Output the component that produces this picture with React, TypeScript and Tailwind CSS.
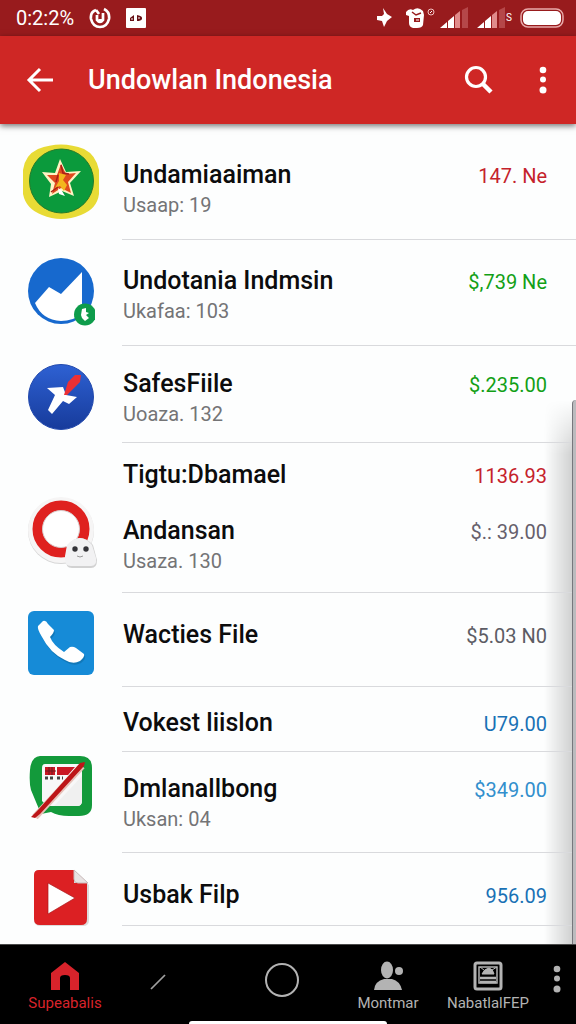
import type { ReactNode } from "react";

type Entry = { title: string; sub?: string; price: string; tone: string };
type Row = {
  height: string;
  iconPad: string;
  textPad: string;
  icon?: ReactNode;
  entries: Entry[];
};

function StarBadge() {
  return (
    <svg width="76" height="76" viewBox="0 0 76 76" aria-hidden="true">
      <path d="M15 5Q38-4 61 5Q73 11 76 26V50Q74 65 58 71Q38 79 19 71Q3 65 0 50V26Q2 11 15 5Z" fill="#e8db35" />
      <circle cx="38.500" cy="37" r="32" fill="#0b9a3c" stroke="#257a2b" />
      <path d="M37 15L43 28L58 27L47 39L51 52L39 47L26 53L28 40L19 28L32 29Z" fill="#fff3c4" />
      <path d="M38 20L43 30L53 29L45 38L48 49L38 44L29 50L32 39L24 31L34 31Z" fill="#df4a1e" />
      <path d="M36 29L43 31L40 36L44 41L41 47L37 42L32 44L36 37Z" fill="#f3b51d" />
      <path d="M38 21L40 29L46 30M28 48L35 43M35 31L33 38" stroke="#a91f17" strokeWidth="1.500" fill="none" />
      <path d="M35 44L39 47L42 52L36 50Z" fill="#fff" />
    </svg>
  );
}

function MountainBadge() {
  return (
    <svg width="68" height="70" viewBox="0 0 68 70" aria-hidden="true">
      <circle cx="34" cy="34" r="33" fill="#1769ce" />
      <path d="M8 46L22 30L34 37L55 15V57Q46 64 34 64Q15 63 8 46Z" fill="#fff" />
      <circle cx="58" cy="57.500" r="11" fill="#0e9c4b" />
      <path d="M55 52L59 51V55L62 56L59 58L62 61L58 64L55 61L54 58Z" fill="#fff" />
    </svg>
  );
}

function CompassBadge() {
  return (
    <svg width="68" height="68" viewBox="0 0 68 68" aria-hidden="true">
      <defs>
        <linearGradient id="compass" x1="0" y1="0" x2="0" y2="1">
          <stop stopColor="#2e61d3" />
          <stop offset="1" stopColor="#173b9b" />
        </linearGradient>
      </defs>
      <circle cx="34" cy="34" r="32.500" fill="url(#compass)" stroke="#234aae" />
      <path d="M20 25L36 24L39 32L50 34L42 41L36 38L25 51L21 47L28 32Z" fill="#fff" />
      <path d="M37 32L41 19L48 12L54 12L53 19L40 32Z" fill="#ed3034" />
    </svg>
  );
}

function RingBadge() {
  return (
    <svg width="72" height="74" viewBox="0 0 72 74" aria-hidden="true">
      <circle cx="36" cy="35" r="33" fill="#d6d6d6" />
      <circle cx="36" cy="34" r="33" fill="#f6f5f5" />
      <circle cx="36" cy="33" r="23.500" fill="#fff" stroke="#df211f" strokeWidth="10" />
      <circle cx="36" cy="33" r="18.500" fill="none" stroke="#d8cccc" />
      <path d="M41 62L43 49Q55 35 68 49L72 64Q72 72 66 72H47Q40 72 41 62Z" fill="#d2d2d2" />
      <path d="M40 60L42 49Q55 35 67 49L71 62Q72 70 66 70H46Q39 70 40 60Z" fill="#f2f2f3" />
      <circle cx="50" cy="53" r="2.700" fill="#343438" />
      <circle cx="61" cy="53" r="2.700" fill="#343438" />
      <path d="M52 60Q55 62 58 60" stroke="#999" fill="none" />
    </svg>
  );
}

function PhoneBadge() {
  const handset = "M11 16L16 11Q19 10 21 14L27 20Q27 23 23 27Q26 35 37 42L43 37Q46 36 49 38L57 44Q58 47 53 51Q46 55 38 50Q23 43 15 27Q10 19 11 16Z";
  return (
    <svg width="68" height="66" viewBox="0 0 68 66" aria-hidden="true">
      <rect x="1" y="1" width="66" height="64" rx="6" fill="#168bd7" />
      <path d={handset} fill="#1178b9" transform="translate(1 2)" />
      <path d={handset} fill="#fff" />
    </svg>
  );
}

function NoteBadge() {
  return (
    <svg width="64" height="64" viewBox="0 0 64 64" aria-hidden="true">
      <path d="M11 1H51Q63 1 63 13V50Q63 61 50 61H40Q29 61 22 57L12 59L2 35Q0 28 1 15Q2 2 11 1Z" fill="#139a3b" />
      <path d="M16 9H50Q53 9 53 13V46Q53 51 48 51H18L13 46V13Q13 9 16 9Z" fill="#f8f8f8" />
      <path d="M25 51L53 21V46Q53 51 48 51Z" fill="#f0f0f0" />
      <path d="M16 12H26V20H16ZM28 12H46L39 20H28Z" fill="#ca1824" />
      <path d="M20 12V20M23 12V20M16 16H27" stroke="#6d1a20" />
      <path d="M16 23H25M28 23H34" stroke="#444" strokeWidth="3" strokeDasharray="3 2" />
      <path d="M6 62L53 11" stroke="#e7c1b8" strokeWidth="7" />
      <path d="M2 62L9 55L51 8L56 7L55 11L11 59L6 63Z" fill="#bd1518" />
    </svg>
  );
}

function PlayBadge() {
  return (
    <svg width="60" height="57" viewBox="0 1 60 57" aria-hidden="true">
      <path d="M8 2H42L58 17V52Q58 58 52 58H10Q3 58 3 52V8Q3 2 8 2Z" fill="#aaa" opacity=".4" />
      <path d="M8 2H43V15H56V51Q56 57 50 57H9Q3 57 3 51V7Q3 2 8 2Z" fill="#dc2023" />
      <path d="M43 2L57 15H47Q43 15 43 11Z" fill="#e8e3e3" stroke="#c8baba" />
      <path d="M17 15L44 30L17 46Z" fill="#fff" stroke="#ab181b" strokeWidth=".7" />
    </svg>
  );
}

const rows: Row[] = [
  { height: "min-h-[116px]", iconPad: "pt-5", textPad: "pt-9", icon: <StarBadge />, entries: [{ title: "Undamiaaiman", sub: "Usaap: 19", price: "147. Ne", tone: "text-[#c5222b]" }] },
  { height: "min-h-[106px]", iconPad: "pt-[17px]", textPad: "pt-[26px]", icon: <MountainBadge />, entries: [{ title: "Undotania Indmsin", sub: "Ukafaa: 103", price: "$,739 Ne", tone: "text-[#12a016]" }] },
  { height: "min-h-[97px]", iconPad: "pt-[17px]", textPad: "pt-[23px]", icon: <CompassBadge />, entries: [{ title: "SafesFiile", sub: "Uoaza. 132", price: "$.235.00", tone: "text-[#12a016]" }] },
  {
    height: "min-h-[150px]",
    iconPad: "pt-[53px]",
    textPad: "pt-[17px]",
    icon: <RingBadge />,
    entries: [
      { title: "Tigtu:Dbamael", price: "1136.93", tone: "text-[#c5222b]" },
      { title: "Andansan", sub: "Usaza. 130", price: "$.: 39.00", tone: "text-[#66606c]" },
    ],
  },
  { height: "min-h-[94px]", iconPad: "pt-[17px]", textPad: "pt-[27px]", icon: <PhoneBadge />, entries: [{ title: "Wacties File", price: "$5.03 N0", tone: "text-[#5c5c64]" }] },
  { height: "min-h-[65px]", iconPad: "pt-0", textPad: "pt-[21px]", entries: [{ title: "Vokest liislon", price: "U79.00", tone: "text-[#1971b5]" }] },
  { height: "min-h-[101px]", iconPad: "pt-[3px]", textPad: "pt-[22px]", icon: <NoteBadge />, entries: [{ title: "Dmlanallbong", sub: "Uksan: 04", price: "$349.00", tone: "text-[#328fcd]" }] },
  { height: "min-h-[73px]", iconPad: "pt-4", textPad: "pt-[27px]", icon: <PlayBadge />, entries: [{ title: "Usbak Filp", price: "956.09", tone: "text-[#1971b5]" }] },
];

function ListRow({ row }: { row: Row }) {
  return (
    <li className={`flex items-stretch ${row.height}`}>
      <div className={`flex w-[122px] shrink-0 justify-center ${row.iconPad}`}>
        <div>{row.icon}</div>
      </div>
      <div className={`flex flex-1 flex-col gap-6 border-b border-[#d9dadd] pr-[29px] pl-px ${row.textPad}`}>
        {row.entries.map((entry) => (
          <div key={entry.title} className="flex items-start justify-between">
            <div className="whitespace-nowrap">
              <h2 className="text-[25px] leading-[30px] font-medium text-[#0c0c0d]">{entry.title}</h2>
              {entry.sub && <p className="text-[20px] leading-[30px] text-[#747476]">{entry.sub}</p>}
            </div>
            <span className={`whitespace-nowrap text-[20px] leading-8 ${entry.tone}`}>{entry.price}</span>
          </div>
        ))}
      </div>
    </li>
  );
}

function Signal() {
  return (
    <svg width="29" height="22" viewBox="0 0 29 22" aria-hidden="true">
      <path d="M0 21L7 15V21ZM8 14L14 9V21H8Z" fill="#fff" />
      <path d="M15 8L20 4V21H15Z" fill="#e18b8b" />
      <path d="M22 3L28 0V21H22Z" fill="#b54749" />
    </svg>
  );
}

function StatusBar() {
  return (
    <div className="flex h-9 items-center justify-between bg-[#981b1d] pr-3 pl-4 text-white">
      <div className="flex items-center">
        <span className="w-[73px] text-[20px] leading-6">0:2:2%</span>
        <svg width="22" height="22" viewBox="0 0 22 22" aria-hidden="true">
          <path d="M7 3Q1 5 2 12Q4 20 11 20Q18 20 20 12Q21 5 15 2M7 3L10 7M8 8V13Q11 17 14 13V6" fill="none" stroke="#fff" strokeWidth="2.700" />
          <path d="M9 12Q11 17 14 12Z" fill="#fff" />
        </svg>
        <svg className="ml-3.5" width="22" height="22" viewBox="0 0 22 22" aria-hidden="true">
          <rect x="1" y="1" width="20" height="20" rx="1" fill="#fff" />
          <path d="M5 14V11L9 8V14ZM12 8Q18 9 17 12Q16 14 12 14Z" fill="#671015" />
          <path d="M7 11V13M14 10V12" stroke="#fff" />
        </svg>
      </div>
      <div className="flex items-center gap-2">
        <svg width="17" height="20" viewBox="0 0 17 20" aria-hidden="true">
          <path d="M7 0L11 6L16 9L11 13L8 19L6 13L1 12V8L6 8L8 6Z" fill="#fff" />
        </svg>
        <svg className="ml-1" width="31" height="22" viewBox="0 0 31 22" aria-hidden="true">
          <path d="M1 5Q4 1 8 3Q13-1 18 4L19 8L18 18Q17 21 12 21H8Q4 20 4 16V9L1 8Z" fill="#fff" />
          <path d="M7 5L11 8L16 6" fill="none" stroke="#981b1d" strokeWidth="1.500" />
          <path d="M9 11H15V15H9Z" fill="#981b1d" />
          <path d="M11 13H14" stroke="#fff" />
          <circle cx="26" cy="5" r="3" fill="none" stroke="#f1c2c2" />
          <path d="M25 6L27 4" stroke="#fff" />
        </svg>
        <div className="-ml-1"><Signal /></div>
        <div className="flex items-center">
          <Signal />
          <span className="text-[10px] leading-3">S</span>
        </div>
        <svg width="44" height="20" viewBox="0 0 44 20" aria-hidden="true">
          <rect x="1" y="1" width="42" height="18" rx="7" fill="none" stroke="#e8aaaa" strokeWidth="1.500" />
          <rect x="3" y="3" width="38" height="14" rx="5" fill="#fff" />
        </svg>
      </div>
    </div>
  );
}

function Dots({ size }: { size: number }) {
  return (
    <svg width="10" height={size} viewBox="0 0 10 28" aria-hidden="true" fill="currentColor">
      <circle cx="5" cy="4" r="3.300" />
      <circle cx="5" cy="13.500" r="3" />
      <circle cx="5" cy="24" r="3.500" />
    </svg>
  );
}

function AppBar() {
  return (
    <header className="relative z-10 flex h-[88px] items-center bg-[#cf2725] pr-7 pl-[26px] text-white shadow-[0_2px_6px_rgba(0,0,0,0.55)]">
      <button type="button" aria-label="Back" className="shrink-0">
        <svg width="28" height="28" viewBox="0 0 28 28" fill="none" stroke="currentColor" strokeWidth="3" aria-hidden="true">
          <path d="M14 3L3 14L14 25M3 14H27" />
        </svg>
      </button>
      <h1 className="ml-[34px] flex-1 whitespace-nowrap text-[27px] leading-8 font-medium">Undowlan Indonesia</h1>
      <button type="button" aria-label="Search" className="shrink-0">
        <svg width="30" height="30" viewBox="0 0 30 30" fill="none" stroke="currentColor" aria-hidden="true">
          <circle cx="12" cy="12" r="9.500" strokeWidth="3.200" />
          <path d="M18 18L27 27" strokeWidth="4.500" />
        </svg>
      </button>
      <button type="button" aria-label="More options" className="ml-11 shrink-0">
        <Dots size={28} />
      </button>
    </header>
  );
}

function BottomNav() {
  return (
    <nav className="relative grid h-20 grid-cols-[130fr_77fr_150fr_82fr_98fr_39fr] border-t border-[#4a4a4a] bg-black text-[#b3b3b3]">
      <a href="#home" className="flex flex-col items-center pt-4 text-[#d8232b]">
        <svg width="30" height="30" viewBox="0 0 30 30" fill="currentColor" aria-hidden="true">
          <path d="M1 12L15 1L29 12V29H20V17Q20 14 15 14Q10 14 10 17V29H1Z" />
        </svg>
        <span className="text-[15px] leading-6 whitespace-nowrap">Supeabalis</span>
      </a>
      <div className="flex justify-center pt-7 pr-[21px]">
        <svg width="18" height="18" viewBox="0 0 18 18" stroke="#a0a0a0" strokeWidth="1.700" aria-hidden="true">
          <path d="M2 16L16 2" />
        </svg>
      </div>
      <button type="button" aria-label="Home screen" className="flex justify-center pt-[17px]">
        <svg width="36" height="36" viewBox="0 0 36 36" fill="none" stroke="#b3b3b3" strokeWidth="2" aria-hidden="true">
          <circle cx="18" cy="18" r="16" />
        </svg>
      </button>
      <a href="#contacts" className="flex flex-col items-center pt-4 pr-5">
        <svg width="32" height="30" viewBox="0 0 32 30" fill="currentColor" aria-hidden="true">
          <ellipse cx="15" cy="9" rx="6" ry="8.500" />
          <circle cx="27" cy="10" r="4" />
          <path d="M2 29Q3 20 12 18H20Q28 20 30 29Z" />
        </svg>
        <span className="text-[15px] leading-6 whitespace-nowrap">Montmar</span>
      </a>
      <a href="#files" className="flex flex-col items-center pt-4">
        <svg width="30" height="30" viewBox="0 0 30 30" fill="none" stroke="currentColor" aria-hidden="true">
          <rect x="2" y="2" width="26" height="26" rx="2" strokeWidth="3" />
          <path d="M6 22V6H24V22Z" strokeWidth="1.500" />
          <path d="M9 13Q11 8 16 7Q20 8 21 13ZM7 6L11 9M24 6L19 9" fill="currentColor" />
          <path d="M7 17H23M7 21H23" strokeWidth="2.500" />
        </svg>
        <span className="text-[15px] leading-6 whitespace-nowrap">NabatlalFEP</span>
      </a>
      <button type="button" aria-label="More" className="flex justify-center pt-5">
        <Dots size={28} />
      </button>
      <div className="absolute bottom-0 left-1/2 h-[3px] w-[198px] -translate-x-1/2 rounded-t-sm bg-white" />
    </nav>
  );
}

export default function App() {
  return (
    <div className="flex min-h-screen flex-col bg-[#fdfefe] font-[Roboto,sans-serif]">
      <StatusBar />
      <AppBar />
      <main className="relative flex-1 overflow-hidden pb-[18px]">
        <div className="pointer-events-none absolute right-0 bottom-0 h-[544px] w-8 bg-linear-to-r from-transparent to-black/20 mask-t-from-90%" />
        <ul className="relative">
          {rows.map((row) => (
            <ListRow key={row.entries[0].title} row={row} />
          ))}
        </ul>
        <div className="absolute right-0 bottom-0 h-[544px] w-1 rounded-tl-full border-l border-[#77777d] bg-[#bbbbbe]" />
      </main>
      <BottomNav />
    </div>
  );
}
